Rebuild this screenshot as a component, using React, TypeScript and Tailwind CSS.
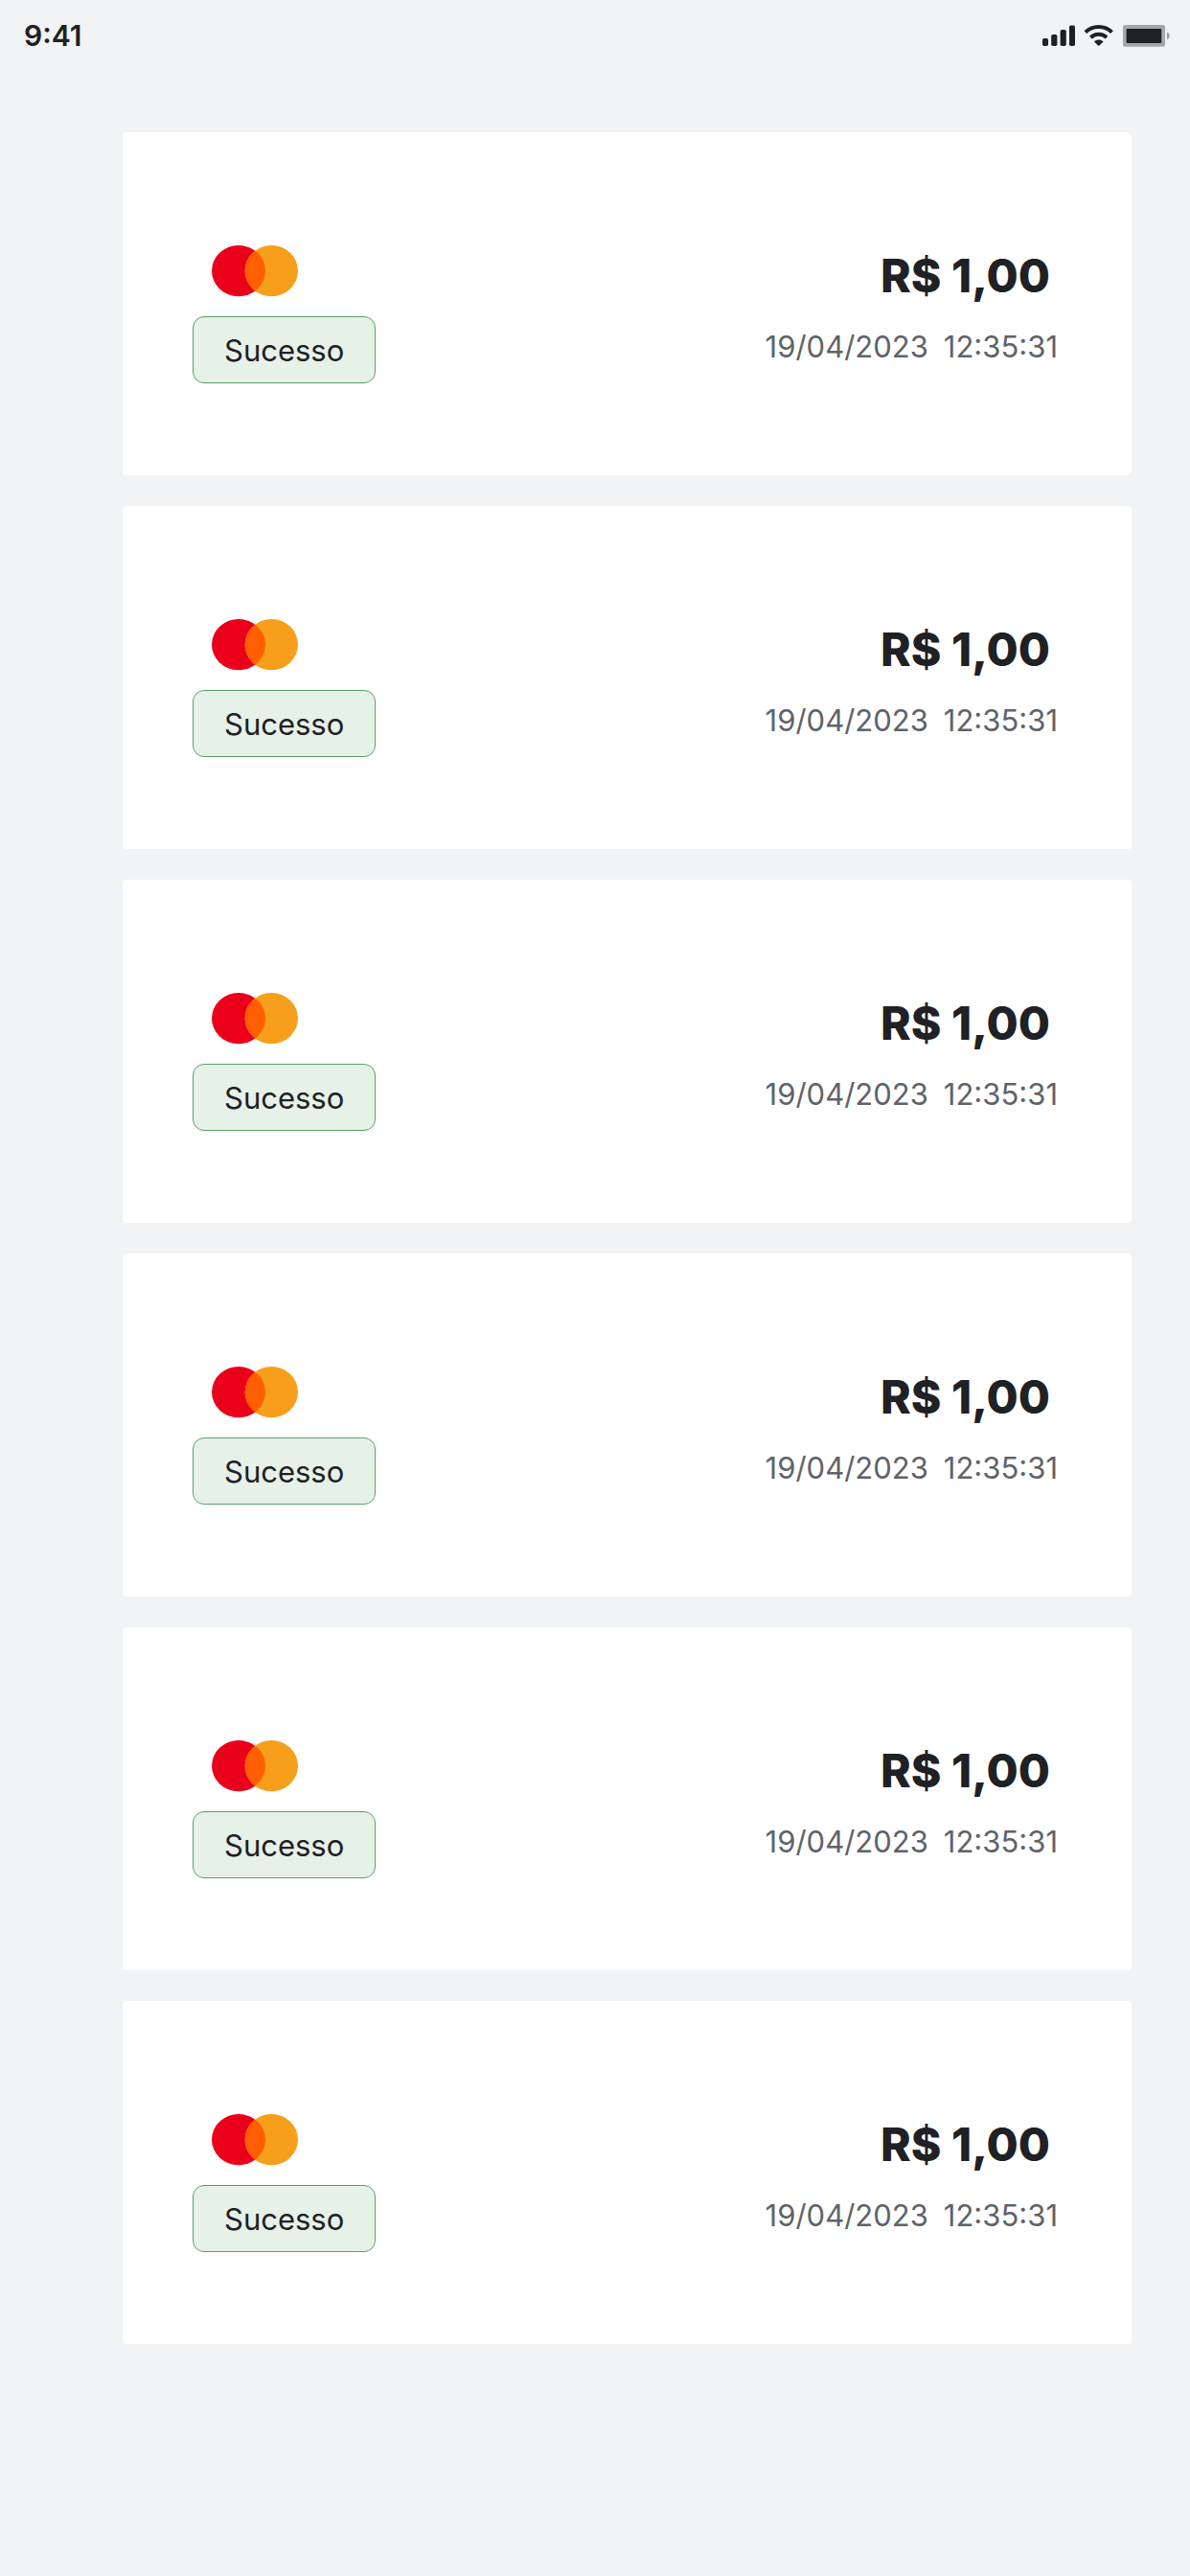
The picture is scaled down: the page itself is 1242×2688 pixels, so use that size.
interface Transaction {
  id: number;
  status: string;
  amount: string;
  date: string;
  time: string;
}

const transactions: Transaction[] = [1, 2, 3, 4, 5, 6].map((id) => ({
  id,
  status: "Sucesso",
  amount: "R$ 1,00",
  date: "19/04/2023",
  time: "12:35:31",
}));

const SignalIcon = () => (
  <svg width="34" height="24" viewBox="0 0 34 24" fill="currentColor" aria-hidden="true">
    <rect x="0" y="15" width="6" height="8" rx="1.8" />
    <rect x="9.2" y="11" width="6.2" height="12" rx="1.8" />
    <rect x="18.6" y="6" width="6.2" height="17" rx="1.8" />
    <rect x="28" y="1.4" width="6" height="21.6" rx="1.8" />
  </svg>
);

const WifiIcon = () => (
  <svg width="32" height="24" viewBox="0 0 32 24" fill="none" stroke="currentColor" strokeWidth="4" aria-hidden="true">
    <path d="M1.9 8.6C9.5 1.1 21.9 1.1 29.5 8.6" />
    <path d="M7.4 14.2c4.6-4.6 12-4.6 16.6 0" />
    <path
      d="M11.1 18.1c2.6-2.3 6.6-2.3 9.2 0 .2.2.2.4 0 .6l-4.2 4.1c-.2.2-.5.2-.7 0l-4.2-4.1c-.3-.2-.3-.4-.1-.6z"
      fill="currentColor"
      stroke="none"
    />
  </svg>
);

const BatteryIcon = () => (
  <svg width="50" height="24" viewBox="0 0 50 24" fill="currentColor" aria-hidden="true">
    <rect x="0" y="1" width="44" height="22.8" rx="2.6" opacity="0.36" />
    <rect x="3.6" y="5" width="36.6" height="15" rx="1" />
    <path d="M46 8.6c1.6.6 2.6 2 2.6 3.8s-1 3.2-2.6 3.8z" opacity="0.4" />
  </svg>
);

const StatusBar = () => (
  <header className="flex h-[74px] items-center justify-between pl-[25px] pr-5 text-[#202124]">
    <span className="text-[30px] font-semibold leading-9">9:41</span>
    <div className="flex items-center gap-[9px]">
      <SignalIcon />
      <WifiIcon />
      <BatteryIcon />
    </div>
  </header>
);

const MastercardLogo = () => (
  <svg className="ml-5" width="90" height="54" viewBox="0 0 90 54" role="img" aria-label="Mastercard">
    <defs>
      <clipPath id="left-circle">
        <ellipse cx="28" cy="26.6" rx="28" ry="26.6" />
      </clipPath>
    </defs>
    <ellipse cx="28" cy="26.6" rx="28" ry="26.6" fill="#EB001B" />
    <ellipse cx="62.3" cy="26.6" rx="27.7" ry="26.6" fill="#F79E1B" />
    <ellipse cx="62.3" cy="26.6" rx="27.7" ry="26.6" fill="#FF5F00" clipPath="url(#left-circle)" />
  </svg>
);

const TransactionCard = ({ status, amount, date, time }: Omit<Transaction, "id">) => (
  <li className="flex items-start justify-between rounded bg-white pb-24 pl-[73px] pr-[77px] pt-[118px]">
    <div className="flex flex-col gap-5">
      <MastercardLogo />
      <span className="rounded-xl border border-[#5b9f68] bg-[#e6f1e8] px-8 pb-[13px] pt-[15px] text-[31px] leading-10 text-[#202124]">
        {status}
      </span>
    </div>
    <div className="flex flex-col items-end gap-[22px]">
      <strong className="pr-2 text-5xl font-extrabold leading-[64px] text-[#202124]">{amount}</strong>
      <p className="flex gap-4 text-[31px] leading-10 text-[#5f6368]">
        <span>{date}</span>
        <span>{time}</span>
      </p>
    </div>
  </li>
);

const App = () => {
  return (
    <div className="min-h-screen bg-[#f2f3f5] font-['Inter',sans-serif]">
      <StatusBar />
      <main className="pb-16 pl-32 pr-[61px] pt-16">
        <ul className="flex flex-col gap-8">
          {transactions.map(({ id, ...transaction }) => (
            <TransactionCard key={id} {...transaction} />
          ))}
        </ul>
      </main>
    </div>
  );
};

export default App;
